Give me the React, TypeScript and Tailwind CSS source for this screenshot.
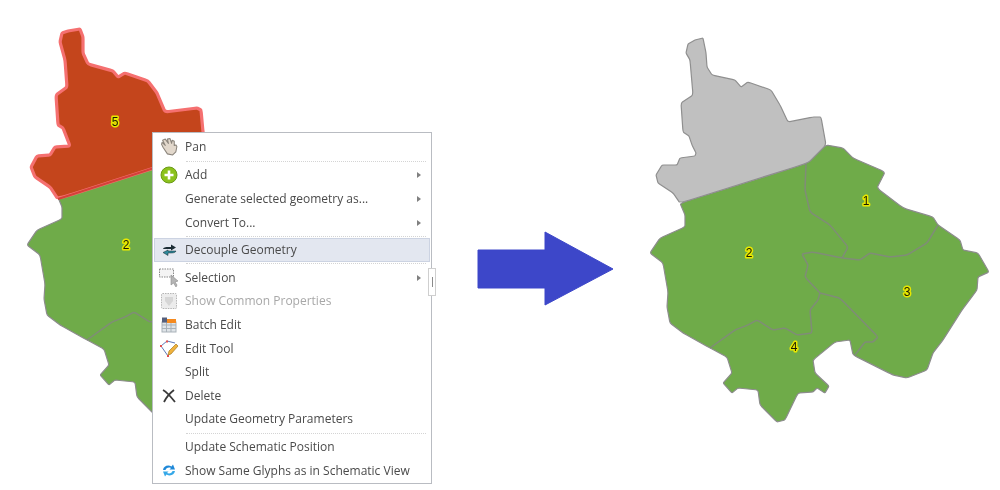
import React from 'react'

const GREEN_OUTLINE = "826,145 843,148 853,158 885,172 877,188 903,208 933,217 938,225 960,240 963,250 978,253 989,272 978,277 977,290 962,310 943,340 933,353 927,370 907,378 893,375 853,355 850,340 835,342 813,360 815,373 829,386 825,393 817,388 813,392 798,393 785,420 777,422 760,405 758,390 738,388 732,393 723,383 732,373 727,357 710,348 683,333 670,323 667,307 668,292 663,263 650,253 660,238 685,227 685,215 680,203 808,163"
const BORDERS = [
    "806,164 805,190 810,212 830,225 848,247 842,258",
    "938,225 927,243 907,255 890,257 870,253 860,260 842,258 813,252 802,254 808,265 805,277 820,293",
    "820,293 840,298 878,337 873,342 865,342 855,355",
    "820,293 818,300 810,310 812,333 797,335 785,328 773,330 757,320 748,325 735,330 710,348",
]
const GRAY_PART = "688,44 695,40 703,38 706,53 707,67 712,75 735,80 741,87 748,82 771,90 780,105 788,122 813,117 821,117 826,145 808,163 680,203 673,193 658,183 656,175 662,165 677,165 680,158 695,156 696,153 692,145 689,136 683,132 681,103 693,95 690,60 686,53"
const RED_PART = "62,33 68,31 80,29 83,37 83,53 88,64 113,71 118,77 125,73 148,81 157,93 165,112 197,108 201,110 203,132 208,150 185,158 58,199 50,187 35,177 31,167 37,156 50,155 55,147 70,146 63,128 58,125 56,95 67,87 65,60 60,42"

// takes the edge off every corner of a point list, the outlines have no hard corners
const smooth = (points: string, closed: boolean) => {
    const pts = points.split(' ').map(p => p.split(',').map(Number))
    const lerp = (a: number[], b: number[], t: number) => `${a[0] + (b[0] - a[0]) * t},${a[1] + (b[1] - a[1]) * t}`
    let d = closed ? `M${lerp(pts[0], pts[1], 0.12)}` : `M${pts[0].join(',')}`
    const count = pts.length
    for (let i = 1; i < (closed ? count + 1 : count - 1); i++) {
        const prev = pts[(i - 1) % count]
        const cur = pts[i % count]
        const next = pts[(i + 1) % count]
        d += ` L${lerp(cur, prev, 0.12)} Q${cur.join(',')} ${lerp(cur, next, 0.12)}`
    }
    return closed ? d + ' Z' : d + ` L${pts[count - 1].join(',')}`
}

const Label: React.FC<{ x: number, y: number, children: React.ReactNode }> = ({ x, y, children }) => (
    <text x={x} y={y} textAnchor="middle" dominantBaseline="central" fontSize="12" fontFamily="'Liberation Sans', sans-serif" fill="#1a1a00" stroke="#e8e800" strokeWidth="3" strokeLinejoin="round" paintOrder="stroke">{children}</text>
)

const GreenRegions = () => (
    <>
        <path d={smooth(GREEN_OUTLINE, true)} fill="#6fab49" stroke="#8c8c8c" strokeWidth="1.2" />
        {BORDERS.map((b, i) => <path key={i} d={smooth(b, false)} fill="none" stroke="#808c78" strokeWidth="1.5" />)}
    </>
)

const HandIcon = () => (
    <svg width="19" height="19" viewBox="0 0 18 18">
        <path d="M5 2 L8 6 L7 2 L9.5 1.5 L11 6 L11.5 3 L13.5 4 L13.5 8 L15 7.5 L16 9 L15 14 L12 17 L7 16 L3 10 L1.5 7 L2 5 L5 8 L2.5 3 Z" fill="#e2d8cc" stroke="#8a847b" strokeWidth="1" strokeLinejoin="round" />
    </svg>
)
const AddIcon = () => (
    <svg width="18" height="18" viewBox="0 0 18 18">
        <circle cx="9" cy="9" r="8" fill="#8cc21c" stroke="#6b9a18" />
        <path d="M9 4.5 V13.5 M4.5 9 H13.5" stroke="#fff" strokeWidth="2.6" />
    </svg>
)
const DecoupleIcon = () => (
    <svg width="15" height="12" viewBox="0 0 15 12">
        <path d="M1 5 C2 3 4 3 9 3 V0.5 L14 3.5 L9 6.5 V5 C6 5 3 5 1 5 Z" fill="#1b2c34" />
        <path d="M14 7 C13 9 11 9 6 9 V11.5 L1 8.5 L6 6 V7 C9 7 12 7 14 7 Z" fill="#2e8a9c" stroke="#14262c" strokeWidth="0.5" />
    </svg>
)
const SelectionIcon = () => (
    <svg width="20" height="20" viewBox="0 0 20 20">
        <rect x="0.5" y="1" width="14" height="8" fill="#f4f4f4" stroke="#888" strokeDasharray="1.5 1" />
        <path d="M12 7 L12 17 L14.5 15 L17 19 L18 17 L16 14 L19 13 Z" fill="#b5b5b5" stroke="#8a8a8a" strokeWidth="0.6" />
    </svg>
)
const CommonIcon = () => (
    <svg width="18" height="18" viewBox="0 0 18 18">
        <rect x="1.5" y="1.5" width="15" height="15" rx="1" fill="#ececec" stroke="#b5b5b5" strokeDasharray="1.5 1" />
        <path d="M5 5 H13 L13 9 L9 14 L5 9 Z" fill="#d6d6d6" />
    </svg>
)
const BatchIcon = () => (
    <svg width="16" height="16" viewBox="0 0 16 16">
        <rect x="1" y="5" width="14" height="10" fill="#dfe4e8" stroke="#a9b2b9" />
        <path d="M1 8 H15 M1 11.5 H15 M5.5 5 V15 M10 5 V15" stroke="#a9b2b9" />
        <rect x="1" y="0.5" width="5" height="5" fill="#56607c" />
        <rect x="6" y="2" width="9" height="4" fill="#f58a1f" />
    </svg>
)
const EditIcon = () => (
    <svg width="20" height="18" viewBox="0 0 20 18">
        <path d="M2 6 L8 1 L16 3 M2 6 L9 16" fill="none" stroke="#5f78b8" strokeWidth="1" />
        <path d="M9 15 L10 11 L17 4 L19 6 L12 14 Z" fill="#f0b23c" stroke="#a87a20" strokeWidth="0.7" />
        <rect x="1" y="5" width="2" height="2" fill="#e05050" />
        <rect x="7" y="0.5" width="2" height="2" fill="#e05050" />
        <rect x="8" y="15" width="2" height="2" fill="#e05050" />
    </svg>
)
const DeleteIcon = () => (
    <svg width="14" height="14" viewBox="0 0 14 14">
        <path d="M1 1 C5 3 9 8 13 13 M12 1 C8 4 4 9 2 13" fill="none" stroke="#3a3a3a" strokeWidth="1.8" />
    </svg>
)
const SameGlyphsIcon = () => (
    <svg width="14" height="15" viewBox="0 0 14 15">
        <path d="M1 7 C1.5 3 6 1.5 9.5 3.5 L11 1.5 L13 6.5 L7.5 6.5 L9 5 C6.5 4 4 5 3.5 7 Z" fill="#1e88d8" />
        <path d="M13 8 C12.5 12 8 13.5 4.5 11.5 L3 13.5 L1 8.5 L6.5 8.5 L5 10 C7.5 11 10 10 10.5 8 Z" fill="#35a8e8" />
    </svg>
)

type Item = { label: string, icon?: React.ReactNode, arrow?: boolean, disabled?: boolean, active?: boolean } | 'sep'

const items: Item[] = [
    { label: 'Pan', icon: <HandIcon /> },
    'sep',
    { label: 'Add', icon: <AddIcon />, arrow: true },
    { label: 'Generate selected geometry as...', arrow: true },
    { label: 'Convert To...', arrow: true },
    'sep',
    { label: 'Decouple Geometry', icon: <DecoupleIcon />, active: true },
    'sep',
    { label: 'Selection', icon: <SelectionIcon />, arrow: true },
    { label: 'Show Common Properties', icon: <CommonIcon />, disabled: true },
    { label: 'Batch Edit', icon: <BatchIcon /> },
    { label: 'Edit Tool', icon: <EditIcon /> },
    { label: 'Split' },
    { label: 'Delete', icon: <DeleteIcon /> },
    { label: 'Update Geometry Parameters' },
    'sep',
    { label: 'Update Schematic Position' },
    { label: 'Show Same Glyphs as in Schematic View', icon: <SameGlyphsIcon /> },
]

const ContextMenu = () => (
    <div className="absolute left-[152px] top-[132px] w-[280px] h-[352px] bg-white border border-[#b9bcc2] px-px pt-[2px] font-['Open_Sans',sans-serif] text-[12px] text-[#4a4a4a]">
        {items.map((item, index) => {
            if (item === 'sep') {
                return (
                    <div key={index} className={`${index === 1 ? 'h-[5px]' : 'h-[4px]'} flex items-center pl-[32px] pr-[4px]`}>
                        <div className="w-full border-t border-dotted border-[#d4d4d4]"></div>
                    </div>
                )
            }
            return (
                <div key={index} className={`h-[23.6px] flex items-center relative ${item.active ? 'bg-[#e3e7f0] shadow-[inset_0_0_0_1px_#ccd3e2]' : ''} ${item.disabled ? 'text-[#a8a8a8]' : ''}`}>
                    <div className="w-[30px] shrink-0 flex justify-center items-center">{item.icon}</div>
                    <span className="whitespace-nowrap ml-px">{item.label}</span>
                    {item.arrow && <span className="absolute right-[9px] w-0 h-0 border-y-[3.5px] border-y-transparent border-l-[4px] border-l-[#808080]"></span>}
                </div>
            )
        })}
        <div className="absolute left-[275px] top-[135px] w-[8px] h-[28px] bg-white border border-[#cfcfcf] flex items-center justify-center">
            <div className="w-px h-[10px] bg-[#8a8a8a]"></div>
        </div>
    </div>
)

export default function App() {
    return (
        <div className="relative w-[1000px] h-[490px] bg-white overflow-hidden flex blur-[0.4px]">
            <svg className="w-[470px] h-[490px] shrink-0" viewBox="0 0 470 490">
                <g transform="translate(-623 -8)">
                    <GreenRegions />
                </g>
                <path d={smooth(RED_PART, true)} fill="#c4451c" stroke="#f57070" strokeWidth="3.2" />
                <polyline points="58,199 185,158" fill="none" stroke="#d4413a" strokeWidth="2" />
                <Label x={115} y={122}>5</Label>
                <Label x={126} y={245}>2</Label>
            </svg>
            <svg className="w-[150px] h-[490px] shrink-0" viewBox="470 0 150 490">
                <polygon points="478,250 545,250 545,232 613,269 545,305 545,288 478,288" fill="#3d47c9" stroke="#3d47c9" strokeWidth="1" strokeLinejoin="round" />
            </svg>
            <svg className="w-[380px] h-[490px] shrink-0" viewBox="620 0 380 490">
                <GreenRegions />
                <path d={smooth(GRAY_PART, true)} fill="#c0c0c0" stroke="#8f8f8f" strokeWidth="1.2" />
                <Label x={866} y={201}>1</Label>
                <Label x={749} y={253}>2</Label>
                <Label x={907} y={292}>3</Label>
                <Label x={794} y={347}>4</Label>
            </svg>
            <ContextMenu />
        </div>
    )
}
